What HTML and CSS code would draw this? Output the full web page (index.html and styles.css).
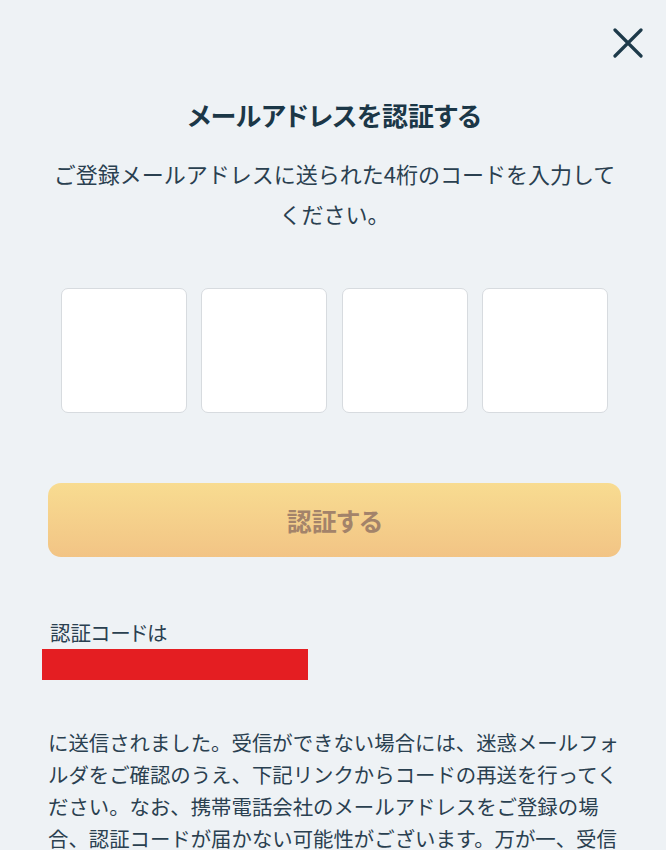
FILE: index.html
```html
<!DOCTYPE html>
<html lang="ja">
<head>
<meta charset="utf-8">
<title>メールアドレスを認証する</title>
<link rel="stylesheet" href="styles.css">
</head>
<body>
<div class="modal">
  <div class="topbar">
    <button class="close" aria-label="閉じる">
      <svg viewBox="0 0 30 30" width="30" height="30"><path d="M2 2 L28 28 M28 2 L2 28" stroke="#1d3a4a" stroke-width="3.2" stroke-linecap="round" fill="none"/></svg>
    </button>
  </div>
  <div class="content">
    <h1 class="title">メールアドレスを認証する</h1>
    <p class="lead">ご登録メールアドレスに送られた4桁のコードを入力してください。</p>
    <div class="codes">
      <input class="code" type="text" maxlength="1">
      <input class="code" type="text" maxlength="1">
      <input class="code" type="text" maxlength="1">
      <input class="code" type="text" maxlength="1">
    </div>
    <button class="submit" disabled>認証する</button>
    <p class="label">認証コードは</p>
    <div class="redact"></div>
    <p class="body">に送信されました。受信ができない場合には、迷惑メールフォルダをご確認のうえ、下記リンクからコードの再送を行ってください。なお、携帯電話会社のメールアドレスをご登録の場合、認証コードが届かない可能性がございます。万が一、受信ができない場合は、別のメールアドレスをご利用ください。</p>
  </div>
</div>
</body>
</html>
```

FILE: styles.css
```css
html, body {
  margin: 0;
  padding: 0;
  background: #eef2f5;
}
body {
  font-family: "Noto Sans CJK JP", "Noto Sans", sans-serif;
  color: #1f3a4a;
}
.modal {
  width: 666px;
  height: 850px;
  overflow: hidden;
}
.topbar {
  display: flex;
  justify-content: flex-end;
  padding: 28px 23px 0 0;
}
.close {
  width: 30px;
  height: 30px;
  padding: 0;
  border: 0;
  background: transparent;
  display: block;
}
.close svg { display: block; }
.content {
  padding: 0 45px 0 48px;
  display: flex;
  flex-direction: column;
}
.title {
  margin: 39px 0 0;
  font-size: 26px;
  line-height: 36px;
  font-weight: 700;
  text-align: center;
  color: #1b3747;
  font-feature-settings: "palt";
}
.lead {
  margin: 20px 0 0;
  font-size: 22px;
  line-height: 40px;
  text-align: center;
  color: #2a4050;
}
.codes {
  margin-top: 55px;
  display: flex;
  justify-content: center;
  gap: 14.5px;
}
.code {
  box-sizing: border-box;
  width: 126px;
  height: 125px;
  margin: 0;
  border: 1.5px solid #d7dbdf;
  border-radius: 7px;
  background: #ffffff;
}
.submit {
  margin-top: 70px;
  height: 74px;
  width: 100%;
  border: 0;
  border-radius: 13px;
  background: linear-gradient(180deg, #f8dc91 0%, #f2c485 100%);
  color: #a3836a;
  font-family: inherit;
  font-size: 25px;
  font-weight: 700;
  font-feature-settings: "palt";
}
.label {
  margin: 60px 0 0 2px;
  font-size: 20.5px;
  line-height: 30px;
  color: #2a4050;
  font-feature-settings: "palt";
}
.redact {
  margin: 2px 0 0 -6px;
  width: 266px;
  height: 31px;
  background: #e41e22;
}
.body {
  margin: 46px 0 0;
  font-size: 20.4px;
  line-height: 32px;
  color: #2a4050;
}
```
